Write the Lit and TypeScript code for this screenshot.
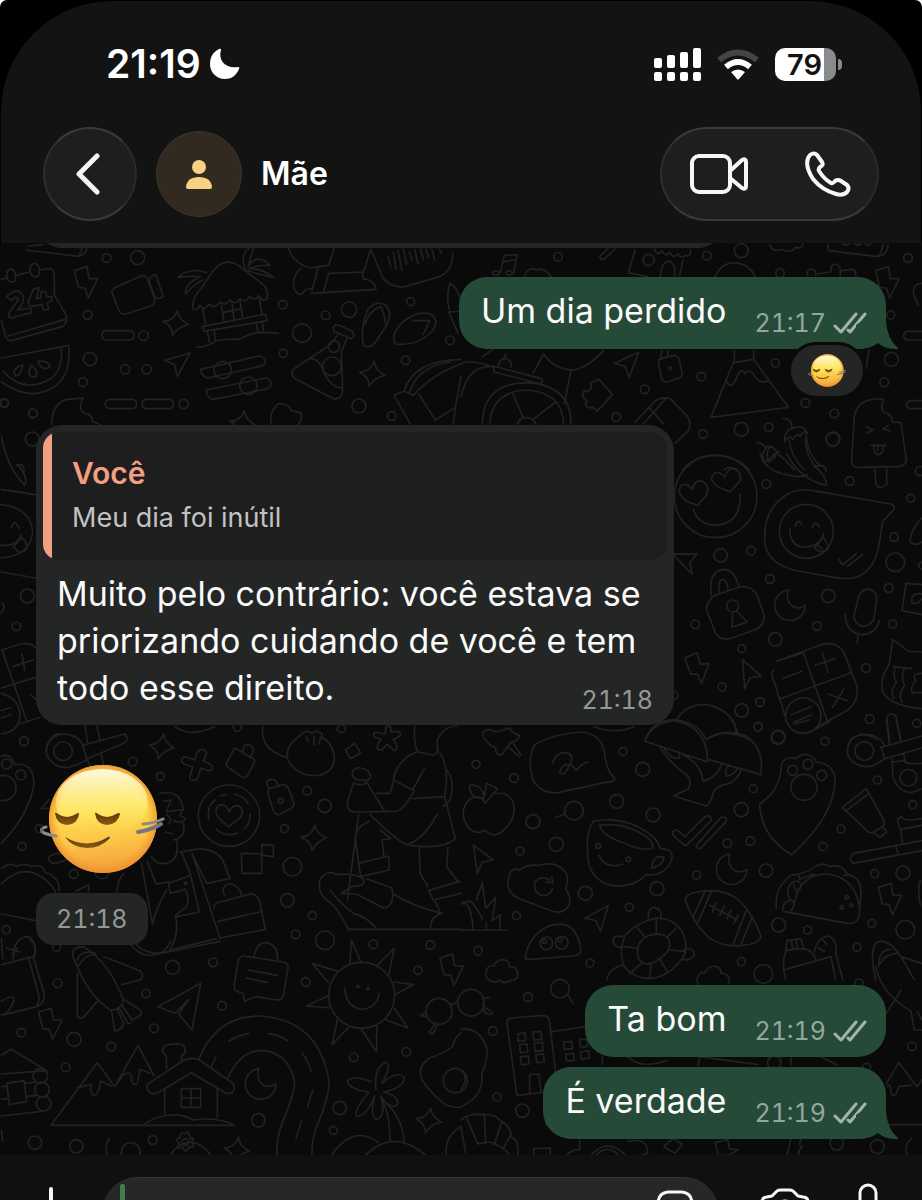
import { LitElement, html, svg, css } from "lit";
import { customElement, property } from "lit/decorators.js";

type Dot = [number, number, number];
type Stamp = [string, number, number, number?];

/* Small shapes that the wallpaper repeats, each centred on 0,0. */
const STAMPS: Record<string, string> = {
  sparkle: "M6 -38 Q8 -12 38 4 Q10 8 -10 36 Q-8 10 -38 -6 Q-6 -6 6 -38Z",
  bolt: "M-34 -36 L4 -48 L10 -12 L36 -12 L8 46 L-2 16 L-22 14Z",
  moon: "M-6 -46 A46 46 0 1 0 46 0 Q26 14 6 2 Q-14 -14 -6 -46Z",
  arrow: "M-38 -14 L38 -36 L0 34 L-8 0Z",
  pointer: "M-18 -42 L38 6 L4 12 L-12 44Z",
  cloud: "M-34 30 Q-54 20 -46 0 Q-40 -18 -24 -14 Q-12 -38 10 -32 Q24 -28 24 -12 Q46 -14 48 8 Q50 28 30 28 Q6 44 -6 28 Q-20 40 -34 30Z",
};

interface Sheet {
  x: number;
  y: number;
  dots: Dot[];
  stamps: Stamp[];
  lines: string[];
}

/* The wallpaper is drawn in sheets, three drawing units to the pixel. */
const SHEETS: Sheet[] = [
  {
    x: 0,
    y: 230,
    dots: [
      [320, 84, 13], [413, 83, 21], [263, 255, 13], [431, 317, 14], [270, 387, 20], [375, 418, 14], [440, 418, 14],
      [249, 456, 13], [551, 522, 14], [99, 550, 13], [12, 519, 13], [848, 224, 13], [977, 256, 13], [1047, 239, 23],
      [906, 309, 28], [850, 370, 12], [1232, 215, 12], [1350, 331, 13], [1217, 391, 13], [1077, 528, 21],
      [1175, 558, 13], [1002, 350, 17], [996, 409, 28], [668, 420, 26], [745, 467, 26],
    ],
    stamps: [["bolt", 257, 158], ["sparkle", 527, 280], ["sparkle", 1117, 432], ["arrow", 532, 405], ["sparkle", 727, 580]],
    lines: [
      "M78 60 L235 79 Q258 74 260 54 M245 56 L238 78 M85 48 L128 44",
      "M4 148 L20 144 M48 136 L88 126 M118 120 L150 116 Q162 118 163 140 L163 196 M163 196 L196 250 Q206 280 186 290 L34 332 Q18 332 14 310 L4 270 M196 268 L24 318",
      "M20 140 C18 112 44 110 46 134 C50 160 28 164 20 140Z M90 124 C88 96 114 92 118 118 C120 144 98 150 90 124Z",
      "M20 200 Q50 168 68 194 Q78 216 52 240 L92 234 L94 248 L32 264 Q22 258 28 248 L56 208 Q48 194 34 212Z",
      "M100 178 L118 172 L108 206 L124 202 L122 186 L138 184 L140 200 L156 200 L154 214 L142 218 L146 238 L130 240 L126 224 L90 230 L84 216Z",
      "M4 384 L206 346 Q214 430 168 466 Q96 520 4 456 M184 352 Q190 420 150 448 Q70 492 10 424",
      "M42 426 Q48 408 68 406 Q64 436 46 438Z M94 406 Q116 420 108 440 Q88 446 86 424Z M114 394 Q140 390 150 408 Q138 422 122 410Z",
      "M155 584 Q156 520 200 508 L250 504 Q232 530 250 548 Q276 552 278 574 L300 584",
      "M336 188 Q334 178 350 170 L424 138 Q436 134 442 146 L464 208 Q466 224 452 228 L378 252 Q362 256 356 240Z M448 156 Q446 138 468 134 L490 200 Q476 210 464 200Z",
      "M318 302 H390 Q402 304 402 317 Q400 330 390 330 H318 Q306 328 306 317 Q306 304 318 302Z",
      "M328 508 H398 Q410 510 410 523 Q408 536 398 536 H328 Q316 534 316 523 Q316 510 328 508Z M438 508 H508 Q520 510 520 523 Q518 536 508 536 H438 Q426 534 426 523 Q426 510 438 508Z",
      "M578 236 Q576 200 606 172 L640 122 Q680 74 728 116 L790 164 Q808 184 800 208 Q786 214 776 196 Q766 216 748 200 Q738 220 720 206 Q706 228 690 210 Q676 230 660 216 Q642 240 628 222 Q612 246 600 226 Q592 246 578 236Z",
      "M608 236 L616 280 M664 226 L672 276 M720 212 L728 264 M778 204 L786 256 M668 248 L724 236 M696 222 L702 268 M606 290 L796 252 L802 272 L612 304Z M622 304 L628 336 M642 300 L646 330 M768 276 L774 306 M786 272 L790 302 M590 352 Q620 352 650 332 Q690 326 720 328 Q760 300 834 310",
      "M620 128 Q570 110 534 142 Q570 138 602 140 Q554 160 556 192 Q586 160 608 150 M736 116 Q714 66 764 44 Q752 80 744 112 Q768 66 810 106 Q774 104 748 116 Q790 116 820 142 Q780 134 744 122",
      "M602 418 L776 378 Q796 378 796 398 Q792 408 776 410 L624 444 Q604 440 602 418Z M618 480 L798 444 Q816 452 812 468 Q806 476 794 478 L640 508 Q620 506 618 480Z",
      "M866 56 Q876 96 930 114 L986 106 L1002 56 M930 114 Q960 110 986 106 M902 114 Q876 140 882 176 Q896 206 914 182 Q928 170 936 180 L954 114 M934 190 L970 188 L986 130 L1090 126 M970 188 L1128 178 Q1126 152 1090 146 Q1084 136 1094 116 L1112 58 L1150 146 Q1180 176 1214 170 L1312 142 Q1358 128 1358 70",
      "M1164 78 L1172 110 M1180 68 L1188 116 M1194 60 L1206 122 M1210 58 L1220 102 M1228 66 L1236 92 M1244 58 L1254 102 M1262 58 L1270 90 M1278 58 L1286 84 M1296 58 L1304 92 M1318 58 L1326 72",
      "M1090 346 Q1080 300 1102 240 Q1130 206 1160 228 Q1184 260 1142 312 Q1114 364 1090 346Z M1096 280 Q1110 240 1142 230 Q1154 250 1156 282 M1186 342 Q1170 316 1206 278 Q1250 240 1292 252 Q1322 274 1294 306 Q1250 350 1186 342Z M1238 272 L1290 272 L1270 312",
      "M1000 294 Q1004 280 1018 286 L1056 304 Q1068 316 1054 326 L1002 304Z M1016 312 L986 348 L882 416 Q868 432 886 446 L1000 506 Q1026 510 1028 480 L1024 366 L1040 326 M926 386 Q960 382 974 434 Q996 472 1024 474",
      "M1350 246 Q1336 200 1350 160 Q1370 172 1378 200 M1346 246 L1374 310 M1346 246 L1380 244",
      "M1182 496 L1212 484 L1240 496 Q1300 430 1383 402 M1212 484 Q1240 390 1383 388 M1228 490 Q1250 410 1350 396 M1182 496 L1232 584 M1256 492 L1306 570 M1306 570 L1366 532 L1360 584 M1366 532 L1383 440",
      "M812 580 Q812 540 824 534 Q832 516 850 522 Q868 526 872 540 L904 550 Q906 570 894 584",
    ],
  },
  {
    x: 461,
    y: 230,
    dots: [
      [291, 80, 13], [563, 90, 17], [738, 77, 13], [841, 62, 21], [957, 129, 13], [1341, 84, 13], [1289, 255, 12],
      [1291, 388, 21], [1270, 457, 13], [943, 399, 12], [721, 440, 13], [551, 478, 13], [466, 561, 13],
      [627, 415, 4], [1033, 519, 13], [1120, 550, 13], [841, 598, 21], [923, 592, 13], [726, 612, 13], [1116, 627, 21],
    ],
    stamps: [["bolt", 1278, 158], ["arrow", 500, 408, -8]],
    lines: [
      "M118 128 L130 76 L168 74 L158 128 M128 94 L164 90 M118 128 Q98 116 94 130 Q106 142 118 128 M158 128 Q136 116 134 130 Q146 142 158 128 M190 140 Q200 108 228 120 Q250 110 270 140",
      "M416 80 L440 56 M416 80 Q420 94 434 84 L462 56 M522 60 L502 128 L560 140 M666 90 L656 136 M580 58 Q590 80 602 62 Q614 84 626 66 Q638 90 650 70 Q662 90 672 76 Q690 84 688 58 M598 140 Q602 94 624 94 Q646 98 640 140 M762 140 Q780 98 824 98 Q870 106 882 140",
      "M926 44 Q934 68 962 58 Q990 72 1004 52 Q1024 58 1026 42 M1100 44 L1102 62 L1250 80 Q1276 78 1282 44 M1266 44 Q1262 70 1250 80 M1144 40 Q1156 52 1166 38 M1180 40 Q1190 50 1200 40 M1214 42 Q1222 52 1230 40",
      "M1040 136 Q1036 116 1052 118 Q1066 120 1064 136 M1066 132 L1108 126 M1110 124 C1106 96 1136 96 1138 120 L1138 138 M1140 122 L1176 118 Q1186 124 1184 138 M1383 160 Q1354 162 1358 190 L1372 226 M1383 304 H1340 Q1328 308 1328 318 Q1330 330 1342 330 H1383 M1383 512 H1350 Q1336 514 1336 524 Q1340 536 1350 536 H1383 M1224 360 L1214 420 Q1206 440 1190 450",
      "M0 400 Q40 388 96 412 M0 500 Q20 410 84 410 M96 408 L240 446 Q246 452 240 462 L100 426Z M112 406 Q116 384 136 386 Q156 394 150 412 M128 388 L134 372 M216 430 L248 372 Q280 420 340 420 Q384 410 428 362 M64 380 L96 358 M330 420 L310 520",
      "M64 582 Q66 460 196 458 Q330 464 330 582 M86 582 Q92 486 196 480 Q304 486 308 582 M170 582 Q176 562 196 562 Q218 564 224 582 M156 492 L186 562 M284 516 L216 568",
      "M366 500 Q360 480 380 484 Q398 476 388 460 L414 448 L454 494 L408 544 Q398 528 388 534 Q366 530 378 514 Q372 508 366 500Z",
      "M522 576 L584 512 Q606 498 630 508 L680 560 Q692 580 682 602 L642 640 M564 532 L606 580 M612 508 L546 582",
      "M594 388 L636 376 Q650 376 654 388 L664 430 Q662 442 650 446 L618 456 Q606 456 602 444 L592 400Z M600 386 L602 362 M618 380 L622 362",
      "M820 360 L820 390 L750 562 L982 532 L878 388 L878 360 M820 398 L878 388 M796 454 Q812 486 832 430 Q846 414 852 430 Q864 416 876 430 Q896 466 920 452",
      "M1192 712 Q1170 712 1172 690 L1180 560 Q1190 500 1268 508 Q1256 536 1270 548 Q1294 552 1294 576 L1320 578 L1336 690 Q1336 706 1312 710Z M1216 590 L1236 600 L1216 610 M1284 586 L1266 596 L1288 604 M1230 646 H1274 M1238 648 Q1238 674 1252 674 Q1268 672 1266 648 M1250 650 V662",
      "M966 566 Q990 562 994 596 Q970 600 970 636 Q986 610 996 630 Q1006 606 1018 620 Q1024 598 1040 610 Q1024 580 994 596 M984 630 Q990 680 1030 720 M1034 612 Q1042 680 1078 706 M888 638 Q908 640 916 656 Q896 670 912 700 Q922 680 930 690 Q936 664 950 672 Q940 644 916 650 M948 670 Q976 690 1000 720 M1060 712 Q1080 700 1096 718",
      "M664 720 Q700 676 766 676 Q830 680 866 720 M790 720 Q804 704 826 720",
    ],
  },
  {
    x: 600,
    y: 440,
    dots: [
      [499, 132, 13], [749, 123, 13], [932, 175, 12], [347, 169, 124], [453, 332, 13], [362, 346, 20], [510, 417, 13],
      [882, 291, 13], [886, 367, 28], [866, 444, 13], [685, 468, 20], [878, 552, 12], [651, 558, 13], [286, 553, 13],
      [526, 598, 20], [425, 626, 12], [366, 741, 12], [480, 786, 13], [425, 811, 20], [474, 860, 13], [535, 890, 20],
      [798, 684, 13], [809, 837, 13], [950, 850, 12], [698, -2, 20], [619, 274, 81], [398, 498, 18], [610, 827, 53],
      [960, 93, 14], [222, 766, 12], [966, 377, 10],
    ],
    stamps: [["moon", 570, 496], ["pointer", 446, 702], ["bolt", 292, 686, -6], ["pointer", 258, 362, -40]],
    lines: [
      "M294 196 Q244 184 238 154 Q238 130 260 134 Q272 138 276 148 Q286 116 308 124 Q330 138 320 164Z M390 156 Q342 140 334 118 Q338 94 358 98 Q370 104 374 112 Q384 82 406 86 Q426 98 420 122Z M280 208 Q292 252 346 256 Q424 252 420 162",
      "M554 168 Q590 142 640 152 L872 192 Q886 196 882 208 L848 244 L836 320 Q820 400 760 414 Q740 418 700 412 L580 390 Q490 364 494 290 Q494 208 554 168Z",
      "M570 264 Q566 318 616 322 Q660 318 672 280 M586 258 Q594 232 606 254 M636 264 Q644 238 658 260 M644 324 L670 292 Q682 306 684 326 Q672 340 656 334Z M656 316 L668 330 M716 358 L728 374 L768 342 M744 378 L788 344",
      "M480 40 Q494 92 560 104 Q600 116 622 104 M560 40 Q600 120 680 136 Q680 110 646 80 Q620 50 616 0 M648 78 Q680 70 678 96 M510 20 Q494 40 508 66 Q512 48 524 54 Q528 32 540 36",
      "M824 88 L828 132 Q840 152 860 132 L860 88 M966 234 Q930 270 930 306 Q944 320 966 306",
      "M334 466 Q324 396 368 388 Q404 388 416 440 M346 462 L346 466 M358 460 Q352 420 368 418 Q382 420 384 450 M330 480 Q320 490 320 510 L346 578 Q360 602 390 596 L470 568 Q496 552 492 524 L470 462 Q452 436 420 440 L340 468Z M398 516 L396 562 L442 546 L410 514",
      "M776 470 Q786 444 810 448 Q832 458 830 480 L822 536 Q810 562 784 558 Q762 550 762 528Z M736 522 Q736 580 788 584 Q828 580 838 542 M774 586 L772 608",
      "M966 434 L918 430 L906 512 L966 524 M966 462 Q930 456 936 488 Q950 496 966 476",
      "M540 660 L664 614 Q706 602 730 634 L770 736 Q780 776 744 810 L660 856 M520 690 Q510 700 524 730 L556 830 M530 664 L610 638 L684 850 M540 776 L754 698 M546 716 L606 694 M644 676 L706 656 M668 640 L684 698 M684 762 L742 782 M732 746 L698 802 M574 824 L634 800 M582 846 L636 824",
      "M966 636 L926 634 L878 598 L868 672 Q836 720 850 760 Q880 800 966 806 M880 680 L936 686 M886 684 Q876 712 890 726 Q868 752 882 776 M912 688 Q902 720 914 736 Q894 762 906 786 M966 700 Q930 700 948 722 Q930 740 936 758 L966 758",
      "M136 898 Q160 836 230 840 Q296 850 318 898 M232 836 Q260 790 320 794 Q400 810 410 880 M318 898 Q370 862 450 898 M860 832 Q870 814 888 828 L902 900 M860 832 L868 896 M752 898 Q790 870 830 898",
    ],
  },
  {
    x: 0,
    y: 400,
    dots: [[99, 40, 13], [14, 10, 12], [97, 117, 21], [82, 588, 21], [49, 679, 13], [72, 1023, 13]],
    stamps: [],
    lines: [
      "M4 108 Q20 200 74 256 Q86 230 52 194 M50 196 Q74 190 72 212 M4 268 L106 284 M0 314 Q90 320 98 396 Q90 470 0 474 M34 384 Q42 354 58 386 M0 436 Q54 440 64 402 M40 440 L66 412 Q84 430 80 446 Q70 458 56 456Z M4 516 L106 534 M4 640 Q20 616 6 608",
      "M6 750 L60 732 Q90 728 106 742 M6 750 L80 962 M4 864 L106 832 M66 762 L74 812 M38 800 L100 780 M90 884 L110 900 M4 880 Q56 896 60 940 Q60 996 4 1002 M4 932 L32 922 M4 954 L32 944 M60 972 L120 952 M138 1050 Q146 1006 180 1000",
    ],
  },
  {
    x: 0,
    y: 720,
    dots: [
      [72, 64, 13], [189, 94, 28], [20, 132, 15], [62, 165, 15], [398, 125, 13], [481, 169, 12], [687, 287, 92],
      [922, 212, 13], [974, 258, 20], [853, 326, 12], [877, 440, 28], [862, 541, 20], [937, 587, 12], [887, 643, 13],
      [975, 661, 28], [66, 379, 12], [221, 462, 13], [19, 629, 12], [170, 682, 12], [1120, 673, 13], [1291, 675, 13],
      [842, 242, 7], [118, 326, 12], [10, 204, 38], [1024, 26, 12], [712, 22, 12], [557, 490, 4], [306, 454, 22],
    ],
    stamps: [["sparkle", 485, 80], ["sparkle", 942, 354, -6]],
    lines: [
      "M248 72 Q224 36 176 44 Q134 60 140 104 Q160 146 206 142 Q252 128 262 116 L372 70 Q390 56 374 42 L248 76 L260 116 M262 66 L256 18 M300 58 L290 18 M262 120 L270 140 M304 104 L310 134 M524 20 Q570 54 644 20",
      "M4 110 Q30 96 44 134 Q98 124 102 190 Q90 280 4 370 M148 264 L124 266 L148 238 M206 398 Q140 400 146 420 Q160 440 200 418",
      "M592 96 Q602 82 616 92 Q622 96 618 104 L610 124 L630 132 Q640 138 636 148 Q630 154 620 150 L602 144 L594 172 Q588 184 574 180 Q568 176 570 168 L578 142 L552 132 Q542 126 546 116 Q552 108 562 112 L584 120Z",
      "M704 84 L760 116 Q766 122 762 130 L742 168 Q734 176 724 170 L682 140 Q676 132 682 124Z M730 96 Q726 72 748 74 Q764 80 758 100 L752 110",
      "M788 20 Q780 90 860 112 M906 42 Q850 80 864 120 Q890 172 960 166 Q1010 150 1002 102 Q990 60 964 52 Q970 36 956 38 Q946 26 938 42 Q922 26 906 42Z M920 52 L924 64 M942 50 L942 76 M962 52 L956 72",
      "M1036 90 L1064 70 L1082 98 L1052 116Z M1160 18 Q1176 14 1172 36 L1196 34 Q1210 44 1190 54 L1180 58 Q1200 86 1184 92 L1160 72 Q1144 100 1132 86 Q1130 70 1144 58 L1122 50 Q1116 34 1136 38 L1154 42Z",
      "M806 206 L850 194 Q862 196 866 206 L882 250 Q880 264 868 268 L838 284 Q826 286 820 272 L804 222Z M806 204 Q792 178 816 178 Q828 178 834 196",
      "M686 320 Q644 290 648 270 Q652 250 672 256 Q684 262 688 276 Q698 252 718 258 Q734 272 722 292Z M626 300 Q620 256 646 240 M660 228 L676 224 M704 222 Q736 230 744 252 M750 282 Q752 310 734 326 M648 326 Q670 352 712 340",
      "M480 220 Q540 206 550 268 L498 276 L514 240 L490 244 M500 284 Q520 296 506 312 M520 300 Q534 310 550 304 Q562 292 540 288 L548 270 M550 310 Q560 350 520 360 M496 336 L520 342 M530 362 Q540 420 500 430 Q470 436 454 410",
      "M540 396 L600 386 Q660 392 672 430 L690 476 L620 490 L576 400 L660 654 M546 400 L572 466 L508 490 Q504 500 512 520 L556 508 Q570 530 560 560 L526 586 Q540 640 510 690 L650 656 M572 466 L598 576 L530 590 M424 430 L458 612 Q470 560 500 510 M442 424 L468 492 L506 486",
      "M674 528 Q660 500 690 490 Q720 500 724 524 M642 566 Q640 548 660 546 L744 524 Q770 516 780 548 L796 628 L660 654 M654 604 L780 576 M400 660 Q430 710 500 696",
      "M350 516 Q356 470 372 460 M228 514 L266 494 L266 514",
      "M724 400 L784 402 L786 460 L726 460Z M786 374 L820 376 L820 410 L786 406Z",
      "M4 446 Q30 424 50 440 Q70 426 96 440 Q130 430 134 456 Q180 470 178 514 M4 492 Q70 424 138 480 Q160 500 166 516 M4 582 L106 602 M40 716 Q40 650 86 650 Q116 670 100 716 M4 654 L8 716",
      "M1244 20 Q1240 70 1254 96 L1292 104 Q1300 110 1312 96 L1312 60 Q1330 20 1370 18 M1250 96 Q1190 120 1180 180 L1238 210 L1274 144 M1318 96 Q1350 140 1334 230 L1238 236 M1180 186 L1170 220 L1130 220 M1244 212 Q1210 270 1190 274 L1060 276 Q1036 270 1044 240 L1060 190 M1056 160 Q1060 142 1080 144 Q1108 146 1112 170 Q1108 184 1090 180 Q1060 184 1056 160Z M1060 190 Q1096 200 1098 184 L1152 270 M1110 284 Q1200 370 1220 374 Q1270 360 1312 282",
      "M1334 230 L1366 356 Q1330 390 1228 376 M1108 304 Q1070 320 1066 350 L1076 430 L1166 408 L1168 450 L1082 470 L1076 430 M1140 330 L1172 356 L1146 360 L1152 410 M1258 384 L1260 460 L1284 500 M1344 382 L1340 440 L1370 480 L1380 486 M1286 512 L1378 484 M1286 512 L1300 540 L1383 520 M1076 284 L1042 540 M1340 150 Q1366 180 1350 240 L1330 260",
      "M1044 626 Q1010 560 986 544 Q950 520 960 480 Q980 446 1010 464 Q1060 458 1090 476 Q1098 500 1060 498 L1024 520 L1070 522 L1150 564 Q1180 560 1178 520 L1176 504 L1100 476 M1130 626 Q1100 590 1060 580 Q1020 550 990 510 M1180 522 Q1240 560 1326 580 Q1290 590 1292 622 M1044 628 H1383 M1304 540 L1318 572",
    ],
  },
  {
    x: 461,
    y: 720,
    dots: [
      [45, 133, 12], [159, 174, 13], [339, 272, 28], [216, 305, 21], [177, 393, 12], [286, 373, 21], [467, 244, 21],
      [486, 95, 12], [545, 148, 21], [576, 285, 21], [373, 520, 21], [588, 506, 21], [505, 562, 12], [166, 587, 12],
      [51, 692, 13], [387, 729, 12], [707, 465, 12], [799, 370, 13], [868, 363, 13], [841, 269, 21], [877, 206, 12],
      [891, 20, 13], [951, 53, 20], [1092, 64, 12], [1210, 93, 28], [1249, 180, 12], [1140, 327, 12], [1086, 380, 12],
      [1342, 173, 25], [1355, 254, 12], [915, 452, 20], [1241, 461, 12], [1326, 459, 21], [953, 615, 21], [1040, 630, 12],
      [1232, 610, 12], [1333, 629, 28], [1188, 682, 12], [841, 725, 12], [907, 762, 28], [1029, 202, 39], [995, 151, 15],
      [1041, 133, 15], [1082, 166, 15], [412, 378, 7], [502, 418, 7], [256, 670, 19], [302, 668, 19], [1158, 532, 5],
      [1142, 562, 5], [1171, 556, 5], [250, 664, 6], [297, 660, 6],
    ],
    stamps: [["moon", 812, 448], ["arrow", 412, 600, -12], ["pointer", 58, 416, -4], ["bolt", 1286, 538], ["cloud", 122, 752], ["cloud", 756, 772]],
    lines: [
      "M64 40 Q80 20 104 36 L146 24 Q160 46 176 44 Q172 66 150 66 L122 104 Q104 108 104 84 Q70 68 64 40Z M144 82 L174 110 M158 70 L180 106",
      "M224 72 Q290 38 366 36 Q420 44 430 96 Q434 150 462 176 Q460 184 450 184 L290 218 Q240 222 216 180 Q196 110 224 72Z M274 130 Q284 96 316 98 Q340 104 328 130 Q312 172 296 158 Q300 130 330 134 L346 152 Q360 130 382 126",
      "M70 234 Q24 236 26 196 Q60 190 70 230 L76 190 L110 206 L72 250 Q60 220 28 236 Q-8 270 16 314 Q40 350 72 330 Q100 360 130 328 Q170 290 156 246 Q140 212 104 222 M312 282 L286 292",
      "M552 64 Q570 10 640 2 Q740 20 740 126Z M742 56 Q790 24 850 46 Q910 80 900 164 L742 118 M596 80 Q620 120 660 152 Q700 176 682 206 L638 228 L736 258 Q750 250 758 214 Q770 196 806 190 Q832 176 840 150 M610 86 Q630 120 656 114 L654 100 M666 104 Q720 130 726 184 Q764 176 784 130 M802 134 Q790 150 796 168 Q820 166 830 144 M816 0 L830 40 M400 20 Q460 44 520 20",
      "M396 304 Q470 290 530 320 Q590 350 598 386 Q640 386 632 420 Q610 470 556 464 Q510 510 440 494 Q380 470 380 400 Q374 340 396 304Z M416 316 Q480 306 540 340 Q580 362 576 384 Q550 396 490 370 Q420 344 416 316Z M588 410 L610 412 Q602 440 572 444 Q574 420 588 410Z M414 406 Q434 450 486 432",
      "M634 338 Q640 326 650 332 L672 350 L734 288 Q752 286 752 300 L674 378 L636 346Z M706 376 L780 292 Q798 288 796 304 L720 384 Q706 388 706 376Z",
      "M992 404 Q900 350 896 252 Q960 210 962 130 Q976 106 1004 116 Q1040 86 1066 126 Q1120 132 1122 180 Q1120 290 992 404Z M974 0 Q1000 60 1060 30 L1110 0 M1000 12 Q1020 6 1044 0",
      "M1270 76 Q1250 36 1196 44 Q1150 60 1162 110 Q1190 150 1240 136 L1272 116 L1383 84 M1260 82 L1383 48 M1260 82 L1272 116 M1276 0 L1286 74 M1306 0 L1320 66 M1292 112 L1296 170 Q1310 214 1350 218 L1383 206 M1328 100 L1332 126 Q1350 134 1383 130 M1292 126 L1330 122",
      "M1144 262 L1216 206 L1268 300 Q1272 318 1262 322 L1234 338 Q1222 340 1214 328Z M1156 272 L1224 220 M1236 336 L1256 352 L1278 336 L1264 320",
      "M1320 328 Q1300 300 1320 290 Q1330 306 1383 296 M1318 328 L1383 316 M1320 330 L1324 370 M1383 362 L1178 400 Q1160 412 1176 430 L1383 392 M1304 378 L1312 402",
      "M144 470 Q150 440 176 450 Q196 432 234 436 Q290 420 316 460 Q324 480 314 506 Q336 540 320 562 Q300 584 270 572 L170 534 Q130 510 144 470Z M266 480 Q236 464 220 490 Q220 524 248 528 Q270 524 274 506 M256 486 L276 488 L272 472",
      "M194 716 Q190 690 220 650 Q260 604 310 614 Q350 624 360 690 Q358 704 340 708 L206 718Z M0 552 Q30 540 36 626 M0 630 H140 M6 546 L20 546 Q30 530 64 596 M46 540 L64 488 L74 566 L104 532 L94 602 L118 584 L116 626 M76 610 V626",
      "M672 536 Q680 520 710 516 Q790 500 840 546 Q880 590 900 650 Q896 664 870 672 Q790 690 740 650 Q690 600 672 536Z M732 514 L696 592 M752 512 L708 614 M856 570 L816 674 M874 590 L840 674 M746 556 L830 600 M764 548 L754 576 M790 558 L776 586 M810 570 L798 596 M832 584 L818 610",
      "M946 566 Q940 500 990 466 Q1040 460 1064 438 Q1090 426 1104 440 Q1144 430 1160 464 Q1200 470 1200 520 L1194 590 Q1186 612 1160 610 L966 574 M1000 548 Q1020 460 1100 462 Q1180 472 1196 560 M986 536 Q970 500 1000 484 Q1026 480 1016 510 M964 570 Q966 544 990 540 Q1008 546 990 572 M1014 466 L1016 478 L1060 462 M1150 466 L1160 464 M998 492 L1000 504 M1006 506 L1004 514",
      "M562 600 Q560 560 582 562 Q604 566 600 598 M484 650 Q456 644 456 664 Q462 684 482 682 M668 690 Q700 680 700 704 Q690 724 664 718 M490 650 Q520 610 586 594 Q640 594 666 640 Q686 690 660 720 Q620 770 570 776 Q520 776 490 740 Q472 700 490 650Z M530 690 Q530 660 566 646 Q610 634 624 660 Q634 690 600 712 Q570 740 544 728 Q526 716 530 690Z M586 594 V640 M528 622 L552 652 M486 680 L528 684 M508 760 L544 728 M566 776 L570 734 M620 758 L596 716 M672 694 L628 690 M646 624 L618 652 M484 734 Q440 750 438 780",
      "M974 692 L978 662 L1020 656 L1028 686 M990 660 L996 688 M1004 658 L1010 686 M974 692 Q1000 686 1028 686 Q1056 690 1064 720 M976 694 Q960 720 974 780 M974 748 L1110 710 L1124 780 M1060 696 Q1070 650 1104 648 Q1130 660 1124 700 L1146 780 M1086 660 L1096 672 M1072 684 L1090 694 M1244 780 Q1224 690 1246 668 Q1280 650 1320 710 L1383 730 M1254 740 Q1250 690 1290 688 M1258 730 Q1270 704 1306 700 M1378 480 Q1368 510 1378 556 M1320 710 L1360 780",
    ],
  },
  {
    x: 0,
    y: 940,
    dots: [
      [518, 82, 21], [639, 67, 13], [173, 130, 13], [438, 160, 13], [64, 278, 13], [222, 298, 21], [334, 320, 13],
      [462, 265, 13], [666, 197, 13], [917, 126, 13], [197, 382, 13], [775, 541, 20], [458, 600, 13], [105, 608, 20],
      [229, 619, 20], [1019, 504, 20], [1000, 571, 12], [1061, 352, 13], [1219, 335, 13], [1254, 91, 12], [1085, 166, 99],
      [121, 408, 22], [126, 449, 22], [131, 491, 22], [1317, 214, 39], [1366, 422, 36], [392, 636, 28], [1074, 140, 3],
      [1104, 146, 3], [556, 606, 10],
    ],
    stamps: [["bolt", 150, 252], ["bolt", 1354, 90], ["moon", 782, 432], ["sparkle", 1286, 542], ["sparkle", 710, 630]],
    lines: [
      "M4 74 L100 50 L132 160 Q136 190 110 200 L4 226 M86 54 L112 150 Q124 180 108 200 M104 48 Q110 10 90 0 M4 184 Q40 160 42 180 Q30 220 4 226 M36 44 L52 24 M20 24 L60 36",
      "M228 70 Q200 20 250 20 Q330 70 370 180 Q366 210 330 210 Q260 160 228 70Z M232 60 Q240 30 284 38 M236 76 Q260 40 288 44 M312 50 L420 92 Q436 108 420 120 L366 134 M232 100 L232 228 Q240 240 252 230 L292 184 M334 210 L344 272 Q360 274 372 252 L350 204 M356 202 L384 250 L392 250 M366 196 L396 240 Q430 226 424 212 L374 180",
      "M474 200 L602 130 L576 270 L536 222 L566 178 L526 220Z",
      "M732 48 L850 66 Q866 70 864 84 L850 166 Q846 182 830 180 L768 170 L734 184 L730 162 L704 150 Q702 140 704 128 L714 66 Q716 50 732 48Z M762 50 Q770 6 800 8 Q836 16 832 60 M744 90 L832 106 M740 114 L802 128 M394 16 Q430 60 480 40 L660 4 M480 40 Q500 30 512 4",
      "M1050 70 L1054 0 L1082 64 M1130 78 L1182 26 L1166 106 M1180 126 L1240 134 L1184 164 M1184 206 L1224 264 L1158 240 M1130 256 L1130 336 L1084 268 M1046 262 L996 314 L1012 240 M990 204 L920 198 L988 166 M986 128 L936 70 L1014 94 M1034 144 Q1038 200 1084 208 Q1128 206 1138 160",
      "M154 554 L292 368 L344 440 L414 316 L462 408 M344 440 L370 404 Q398 390 394 420 Q400 440 412 430 L420 388 L450 400 M232 444 Q262 436 272 432 Q270 466 284 466 Q296 464 302 424 L334 438 M154 556 H700 M500 386 L498 346 Q484 340 490 322 Q500 310 544 312 Q560 320 554 340 L544 348 L546 366",
      "M446 430 L552 360 Q576 350 598 360 L696 428 Q710 440 696 458 Q684 464 672 456 L574 398 L478 456 Q462 466 448 456 Q434 444 446 430Z M494 446 V520 M652 446 V532 M544 446 H602 V502 H544Z M573 446 V502 M544 474 H602 M430 554 Q480 520 540 526 Q560 528 580 540 Q650 530 700 554",
      "M596 358 Q650 226 782 228 Q960 240 988 430 Q984 480 950 560 Q934 600 936 648 M684 414 Q720 330 788 332 Q870 340 884 430 Q880 470 846 550 Q830 590 830 648 M634 380 L648 350 M686 304 Q710 288 746 280 M804 280 Q836 284 862 302 M906 340 Q924 362 934 394 M938 450 L922 502 M904 544 L888 596",
      "M34 328 L140 392 L4 402 M34 328 L4 346 M4 440 L20 438 M74 430 L106 426 M20 430 L72 422 L80 484 L28 494Z M4 478 L22 476 M78 470 L108 466 M4 528 L124 514",
      "M1128 450 Q1120 380 1160 366 Q1174 380 1146 430 Q1190 390 1212 412 Q1216 440 1152 456 Q1200 470 1192 494 Q1170 510 1142 468 Q1160 530 1130 538 Q1108 530 1124 468 Q1100 530 1070 528 Q1060 510 1108 456 Q1050 450 1042 424 Q1056 404 1112 424 M1146 480 Q1170 520 1170 604 M1160 490 Q1210 540 1212 606 M992 648 Q1060 550 1136 608 M1094 648 Q1180 560 1280 648",
      "M1383 280 Q1364 290 1358 320 Q1330 340 1290 354 Q1250 376 1266 420 Q1300 470 1340 496 Q1370 506 1383 500 M1383 560 Q1330 590 1340 648 M1278 216 L1262 226 L1278 230 M1306 250 L1288 276 Q1296 290 1304 272 L1312 250 M1356 194 L1370 186 M328 594 Q312 620 322 646 M510 648 Q530 610 570 606 Q610 610 634 648 M556 582 Q566 566 570 596 Q590 590 574 606 Q590 626 566 620 Q560 646 548 622 Q526 630 538 608 Q520 596 540 594 Q540 574 556 582Z M4 570 L8 604",
    ],
  },
  {
    x: 461,
    y: 940,
    dots: [
      [30, 188, 40], [201, 171, 13], [297, 146, 28], [95, 273, 13], [108, 471, 12], [184, 512, 20], [940, 368, 20],
      [1217, 382, 12], [1353, 319, 13], [1127, 610, 20], [1249, 620, 21], [1194, 130, 13], [262, 548, 8],
    ],
    stamps: [],
    lines: [
      "M322 166 L336 190 M66 176 L84 172 M66 190 L70 216 Q90 230 94 218 L76 204 M0 268 Q60 260 78 330 Q80 360 62 400 Q70 470 0 500 M0 392 Q26 410 0 448",
      "M168 466 L138 250 Q138 236 152 234 L246 226 Q264 228 266 246 L290 450 M168 466 L256 456 M266 276 L384 258 M206 460 V404 L234 402 L240 456",
      "M170 282 L192 278 L194 302 L172 304Z M216 276 L240 274 L242 298 L218 300Z M176 314 L198 312 L200 336 L178 338Z M220 310 L244 306 L246 332 L222 334Z M178 350 L202 348 L204 372 L182 374Z M224 344 L248 342 L250 366 L228 368Z M308 306 L332 304 L334 326 L310 328Z M356 298 L378 298 L380 320 L358 320Z M314 342 L338 340 L340 362 L316 362Z M358 336 L382 332 L386 354 L362 358Z",
      "M0 540 Q20 520 70 524 Q100 520 120 544 Q150 560 150 590 Q176 600 170 646 M18 536 L50 612 M70 524 L74 612 M122 546 L100 614 M152 580 L126 626 M0 560 L14 640 M50 612 Q90 600 110 616 Q140 630 144 646 M218 646 V626 L268 624 V646 M316 646 Q330 630 356 628 L356 600 M390 646 Q440 590 494 646 M404 646 Q440 610 474 646 M500 604 Q560 590 560 640 L540 646 M636 596 L664 612 L642 640 L608 620Z",
      "M762 608 L800 598 L806 626 L830 630 L800 648 M762 608 L772 646 L796 646 M990 596 L978 646 M1022 598 Q1008 614 1024 622 Q1008 630 1016 646 M1352 594 Q1326 620 1340 646 M712 376 L716 350 M716 350 L890 374 M500 350 Q540 390 620 360 M424 350 V374 M990 374 V350 M1080 350 L1130 376",
      "M1276 430 L1314 368 L1368 440 L1383 420 M1278 440 Q1290 426 1290 460 Q1304 480 1312 440 L1350 436 M1280 554 H1383 M1244 80 Q1260 160 1350 214 M1320 150 L1276 220 M1350 214 L1360 270 L1383 270 M1370 216 L1383 240",
    ],
  },
];

@customElement("chat-wallpaper")
export class ChatWallpaper extends LitElement {
  static styles = css`
    :host {
      display: block;
      overflow: hidden;
      background: #0a0a0a;
    }
    .art {
      display: block;
      width: 100%;
      height: 100%;
      fill: none;
      stroke: #212222;
      stroke-width: 5;
      stroke-linecap: round;
      stroke-linejoin: round;
    }
  `;

  render() {
    return html`<svg class="art" viewBox="0 243 922 912" preserveAspectRatio="xMidYMin slice" aria-hidden="true">
      ${SHEETS.map(
        (s) => svg`<g transform="translate(${s.x} ${s.y}) scale(0.33333)">
          ${s.dots.map(([x, y, r]) => svg`<circle cx=${x} cy=${y} r=${r}></circle>`)}
          ${s.stamps.map(([k, x, y, a = 0]) => svg`<path transform="translate(${x} ${y}) rotate(${a})" d=${STAMPS[k]}></path>`)}
          ${s.lines.map((d) => svg`<path d=${d}></path>`)}
        </g>`
      )}
    </svg>`;
  }
}

@customElement("shaking-face")
export class ShakingFace extends LitElement {
  static styles = css`
    :host {
      display: block;
    }
    .face {
      display: block;
      width: 100%;
    }
  `;

  render() {
    return html`<svg class="face" viewBox="0 0 126 110" role="img" aria-label="Rosto sorrindo balançando a cabeça">
      <defs>
        <linearGradient id="skin" x1="0.45" y1="0" x2="0.55" y2="1">
          <stop offset="0" stop-color="#fbd65a"></stop>
          <stop offset="0.4" stop-color="#fee04a"></stop>
          <stop offset="0.7" stop-color="#fcc548"></stop>
          <stop offset="1" stop-color="#f39a38"></stop>
        </linearGradient>
        <radialGradient id="rim" cx="0.5" cy="0.5" r="0.5">
          <stop offset="0.82" stop-color="#f29a2e" stop-opacity="0"></stop>
          <stop offset="1" stop-color="#ee8f2c" stop-opacity="0.8"></stop>
        </radialGradient>
        <linearGradient id="shine" x1="0" y1="0" x2="0" y2="1">
          <stop offset="0" stop-color="#fffce8" stop-opacity="0.95"></stop>
          <stop offset="0.35" stop-color="#fff6b0" stop-opacity="0.7"></stop>
          <stop offset="1" stop-color="#ffec6a" stop-opacity="0"></stop>
        </linearGradient>
        <linearGradient id="brown" x1="0" y1="0" x2="0" y2="1">
          <stop offset="0" stop-color="#5a3a08"></stop>
          <stop offset="1" stop-color="#8a5a14"></stop>
        </linearGradient>
      </defs>
      <circle cx="64" cy="55" r="54" fill="url(#skin)"></circle>
      <circle cx="64" cy="55" r="54" fill="url(#rim)"></circle>
      <ellipse cx="63" cy="38" rx="46" ry="33" fill="url(#shine)"></ellipse>
      <path fill="url(#brown)" d="M16 49 Q17 48 19 50 Q28 56 37 50 Q40 48 40 50 Q39 60 28 61 Q17 60 16 49Z"></path>
      <path fill="url(#brown)" d="M56 49 Q57 48 59 50 Q68 56 77 50 Q81 48 81 50 Q79 60 68 61 Q57 60 56 49Z"></path>
      <path fill="url(#brown)" d="M26 73 Q48 86 69 73 Q71 72 71 74 Q62 84 48 84 Q34 84 26 73Z"></path>
      <g fill="none" stroke-linecap="round">
        <path stroke="#8a8d90" stroke-width="3" d="M7 63 Q-1 65 5 69 Q10 71 17 72"></path>
        <path stroke="#5e6164" stroke-width="2" d="M3 64 L2 68"></path>
        <path stroke="#8b8a86" stroke-width="3" d="M104 60 Q116 59 124 55"></path>
        <path stroke="#77777a" stroke-width="4" d="M99 68 Q112 66 122 60"></path>
      </g>
    </svg>`;
  }
}

@customElement("message-bubble")
export class MessageBubble extends LitElement {
  @property() text = "";
  @property() time = "";
  @property({ type: Boolean }) outgoing = false;
  @property({ type: Boolean }) tail = false;
  @property({ type: Boolean }) reacted = false;
  @property() quoteName = "";
  @property() quoteText = "";

  static styles = css`
    :host {
      display: flex;
      justify-content: flex-start;
    }
    :host([outgoing]) {
      justify-content: flex-end;
    }
    .bubble {
      position: relative;
      border-radius: 26px;
      background: #242626;
      color: #fafafa;
      font-size: 34px;
      line-height: 47px;
    }
    .in {
      max-width: 638px;
      box-sizing: border-box;
      padding: 7px 7px 10px;
    }
    .in .body {
      display: flow-root;
      padding: 10px 14px 0;
    }
    .in .meta {
      float: right;
      margin-top: 21px;
    }
    .out .body {
      display: flex;
      align-items: flex-end;
      gap: 28px;
    }
    .out {
      padding: 10px 19px 11px 22px;
      border-radius: 28px;
      background: #264a38;
    }
    .out .text {
      padding-bottom: 4px;
    }
    .body {
      margin: 0;
    }
    .meta {
      display: flex;
      align-items: center;
      gap: 7px;
      font-size: 25px;
      line-height: 30px;
      font-variant-numeric: tabular-nums;
      color: #969898;
    }
    .out .meta {
      color: #92a89c;
    }
    .ticks {
      display: block;
      width: 34px;
      height: 22px;
      fill: none;
      stroke: #a3b5ab;
      stroke-width: 3;
      stroke-linecap: round;
      stroke-linejoin: round;
    }
    .tail {
      position: absolute;
      right: -12px;
      bottom: 0;
      width: 42px;
      height: 44px;
      fill: #264a38;
    }
    .reaction {
      position: absolute;
      right: 20px;
      bottom: -50px;
      display: grid;
      place-items: center;
      width: 78px;
      height: 57px;
      padding: 0;
      box-sizing: border-box;
      border: 3px solid #0a0a0a;
      border-radius: 29px;
      background: #242626;
    }
    .reaction shaking-face {
      width: 38px;
    }
    .quote {
      display: flex;
      flex-direction: column;
      gap: 9px;
      padding: 23px 20px 24px 29px;
      border-radius: 16px;
      background: linear-gradient(90deg, #f29f82 9px, #1e1e1e 9px);
      line-height: 36px;
    }
    .name {
      font-size: 30px;
      font-weight: 600;
      color: #f29f82;
    }
    .excerpt {
      font-size: 27px;
      color: #c2c2c2;
    }
  `;

  render() {
    return html`<article class="bubble ${this.outgoing ? "out" : "in"}">
      ${this.tail
        ? html`<svg class="tail" viewBox="0 0 42 44" aria-hidden="true">
            <path d="M30 0 V16 Q31 34 42 43 Q43 44 40 44 Q29 44 22 38 Q14 44 2 44 L0 20Z"></path>
          </svg>`
        : null}
      ${this.quoteName
        ? html`<div class="quote">
            <span class="name">${this.quoteName}</span>
            <span class="excerpt">${this.quoteText}</span>
          </div>`
        : null}
      <p class="body">
        <span class="text">${this.text}</span>
        <span class="meta">
          <time>${this.time}</time>
          ${this.outgoing
            ? html`<svg class="ticks" viewBox="0 0 34 22" role="img" aria-label="Entregue">
                <path d="M2 14 L8 20 L23 2 M15 18 L17 20 L32 2"></path>
              </svg>`
            : null}
        </span>
      </p>
      ${this.reacted ? html`<button class="reaction" aria-label="Reação"><shaking-face></shaking-face></button>` : null}
    </article>`;
  }
}

@customElement("app-root")
export class AppRoot extends LitElement {
  static styles = css`
    :host {
      display: block;
      height: 100vh;
      overflow: hidden;
      background: #0f0f0f;
      font-family: Inter, "Liberation Sans", sans-serif;
      color: #fff;
    }
    button {
      padding: 0;
      border: 0;
      background: none;
      color: inherit;
      font: inherit;
    }
    svg {
      display: block;
    }
    .line {
      fill: none;
      stroke: #f7f7f7;
      stroke-linecap: round;
      stroke-linejoin: round;
    }
    .frame {
      border-radius: 7px 7px 0 0;
      background: #000;
    }
    .page {
      background: #fff;
    }
    header {
      padding: 40px 42px 22px;
      border: 1px solid #000;
      border-bottom: 0;
      border-radius: 112px 112px 0 0;
      background: #131313;
    }
    .status {
      display: flex;
      align-items: center;
      justify-content: space-between;
      height: 46px;
      padding: 0 37px 0 63px;
      margin-bottom: 40px;
    }
    .clock {
      display: flex;
      align-items: center;
      gap: 8px;
      font-size: 39px;
      font-weight: 600;
      line-height: 46px;
    }
    .signals {
      display: flex;
      align-items: center;
      gap: 16px;
    }
    .battery {
      display: flex;
      align-items: center;
      gap: 2px;
    }
    .level {
      display: grid;
      place-items: center;
      width: 61px;
      height: 33px;
      box-sizing: border-box;
      padding-right: 2px;
      border-radius: 10px;
      background: linear-gradient(90deg, #fff 80%, #8b8b8b 80%);
      color: #131313;
      font-size: 29px;
      font-weight: 600;
      line-height: 33px;
    }
    .nub {
      width: 4px;
      height: 11px;
      border-radius: 0 4px 4px 0;
      background: #8b8b8b;
    }
    .nav {
      display: flex;
      align-items: center;
    }
    .glass {
      box-sizing: border-box;
      border: 2px solid #333;
      border-color: #3a3a3a #2a2a2a #3a3a3a #2f2f2f;
      background: #1e1e1e;
    }
    .back {
      display: grid;
      place-items: center;
      width: 94px;
      height: 94px;
      border-radius: 50%;
    }
    .contact {
      display: flex;
      align-items: center;
      gap: 19px;
      margin-left: 19px;
      font-size: 32px;
      font-weight: 600;
      line-height: 40px;
    }
    .avatar {
      display: grid;
      place-items: center;
      width: 86px;
      height: 86px;
      box-sizing: border-box;
      border: 1px solid #3f3527;
      border-radius: 50%;
      background: #322a20;
    }
    h1 {
      margin: 0;
      font: inherit;
    }
    .calls {
      display: flex;
      align-items: center;
      justify-content: space-between;
      width: 219px;
      height: 94px;
      margin-left: auto;
      padding: 0 26px 0 27px;
      border-radius: 47px;
    }
    main {
      position: relative;
      padding: 0 36px 16px;
    }
    chat-wallpaper {
      position: absolute;
      inset: 0;
    }
    .thread {
      position: relative;
      display: flex;
      flex-direction: column;
      gap: 10px;
    }
    .earlier {
      display: flex;
      align-items: flex-end;
      height: 5px;
      margin-bottom: 19px;
      overflow: hidden;
    }
    .edge {
      width: 688px;
      height: 60px;
      flex: none;
      border-radius: 26px;
      background: #242626;
    }
    .spaced {
      margin-bottom: 66px;
    }
    .sticker {
      display: flex;
      flex-direction: column;
      align-items: flex-start;
      gap: 19px;
      margin: 29px 0 30px;
    }
    .sticker shaking-face {
      width: 126px;
      margin-left: 3px;
    }
    .chip {
      padding: 11px 20px;
      border-radius: 18px;
      background: #242626;
      color: #969898;
      font-size: 25px;
      line-height: 30px;
      font-variant-numeric: tabular-nums;
    }
    footer {
      display: flex;
      align-items: center;
      padding: 22px 39px 40px 25px;
      background: #101010;
    }
    .box {
      display: flex;
      align-items: center;
      flex: 1;
      min-width: 0;
      height: 72px;
      margin: 0 41px 0 25px;
      padding: 0 25px 0 18px;
      box-sizing: border-box;
      border-top: 1px solid #343434;
      border-radius: 36px;
      background: #272727;
    }
    .caret {
      width: 5px;
      height: 60px;
      border-radius: 2px;
      background: #3f7d4f;
    }
    .box input {
      flex: 1;
      min-width: 0;
      border: 0;
      outline: 0;
      background: none;
      color: #fff;
      font: inherit;
      font-size: 34px;
    }
    .mic {
      margin-left: 43px;
    }
  `;

  render() {
    return html`
      <div class="page">
        <div class="frame">
          <header>
            <div class="status">
              <div class="clock">
                <time>21:19</time>
                <svg width="31" height="32" viewBox="0 0 31 32" fill="#fff" aria-hidden="true">
                  <path d="M10 1 Q12 0 12 2 C9 12 16 21 29 19 Q31 19 30 21 C27 28 22 31 16 31 C7 31 1 24 1 16 C1 9 4 4 10 1Z"></path>
                </svg>
              </div>
              <div class="signals">
                <svg width="47" height="33" viewBox="0 0 47 33" fill="#fff" role="img" aria-label="Sinal">
                  ${[10, 7, 4, 0].map(
                    (y, i) => svg`<rect x=${i * 13} y=${y} width="8" height=${20 - y} rx="2"></rect>
                    <rect x=${i * 13} y="24" width="8" height="9" rx="2"></rect>`
                  )}
                </svg>
                <svg width="42" height="31" viewBox="0 0 42 31" role="img" aria-label="Wi-Fi">
                  <path fill="none" stroke="#444" stroke-width="6" d="M2 11 Q21 -4 40 11"></path>
                  <path fill="none" stroke="#fff" stroke-width="6" d="M9 18 Q21 8 33 18"></path>
                  <path fill="#fff" d="M14 23 Q21 18 28 23 L22 30 Q21 31 20 30Z"></path>
                </svg>
                <div class="battery">
                  <span class="level">79</span>
                  <span class="nub"></span>
                </div>
              </div>
            </div>
            <nav class="nav">
              <button class="back glass" aria-label="Voltar">
                <svg class="line" width="28" height="42" viewBox="0 0 28 42" stroke-width="5">
                  <path d="M20 3 L2 21 L20 39" transform="translate(1 0)"></path>
                </svg>
              </button>
              <div class="contact">
                <span class="avatar">
                  <svg width="28" height="30" viewBox="0 0 28 30" fill="#f8d283" aria-hidden="true">
                    <circle cx="14" cy="8" r="7"></circle>
                    <path d="M3 30 Q1 30 1 28 Q2 18 14 18 Q26 18 27 28 Q27 30 25 30Z"></path>
                  </svg>
                </span>
                <h1>Mãe</h1>
              </div>
              <div class="calls glass">
                <button aria-label="Chamada de vídeo">
                  <svg class="line" width="60" height="40" viewBox="0 0 60 40" stroke-width="4">
                    <rect x="3" y="2" width="38" height="36" rx="7"></rect>
                    <path d="M41 17 L53 6 Q57 4 57 8 V32 Q57 36 53 34 L41 24"></path>
                  </svg>
                </button>
                <button aria-label="Ligar">
                  <svg class="line" width="47" height="47" viewBox="0 0 47 47" stroke-width="4">
                    <path d="M6 4 Q10 1 13 4 L18 11 Q20 14 16 16 Q14 18 15 20 Q20 28 27 32 Q29 33 31 30 Q34 28 37 30 L43 34 Q46 37 43 41 Q39 45 32 43 Q18 39 9 28 Q-1 12 6 4Z"></path>
                  </svg>
                </button>
              </div>
            </nav>
          </header>
        </div>
      </div>
      <main>
        <chat-wallpaper></chat-wallpaper>
        <div class="thread">
          <div class="earlier"><div class="edge"></div></div>
          <message-bubble class="spaced" outgoing tail reacted text="Um dia perdido" time="21:17"></message-bubble>
          <message-bubble
            text="Muito pelo contrário: você estava se priorizando cuidando de você e tem todo esse direito."
            time="21:18"
            .quoteName=${"Você"}
            .quoteText=${"Meu dia foi inútil"}
          ></message-bubble>
          <div class="sticker">
            <shaking-face></shaking-face>
            <time class="chip">21:18</time>
          </div>
          <message-bubble outgoing text="Ta bom" time="21:19"></message-bubble>
          <message-bubble outgoing tail text="É verdade" time="21:19"></message-bubble>
        </div>
      </main>
      <footer>
        <button aria-label="Anexar">
          <svg class="line" width="52" height="52" viewBox="0 0 52 52" stroke-width="4"><path d="M26 2 V50 M2 26 H50"></path></svg>
        </button>
        <div class="box">
          <span class="caret"></span>
          <input type="text" aria-label="Mensagem" />
          <button aria-label="Figurinhas">
            <svg class="line" width="38" height="48" viewBox="0 0 38 48" stroke-width="3">
              <path d="M12 2 H26 Q36 3 36 14 V28 L22 46 H12 Q2 44 2 34 V14 Q2 3 12 2Z M36 28 H28 Q22 30 22 38 V46"></path>
            </svg>
          </button>
        </div>
        <button aria-label="Câmera">
          <svg class="line" width="50" height="50" viewBox="0 0 50 50" stroke-width="3">
            <path d="M2 14 Q2 9 7 9 L12 8 L17 3 Q18 2 21 2 H29 Q32 2 33 3 L38 8 L43 9 Q48 9 48 14 V40 Q48 46 42 46 H8 Q2 46 2 40Z"></path>
            <circle cx="25" cy="24" r="11"></circle>
          </svg>
        </button>
        <button class="mic" aria-label="Gravar áudio">
          <svg class="line" width="30" height="60" viewBox="0 0 30 60" stroke-width="3">
            <rect x="7" y="2" width="16" height="34" rx="8"></rect>
            <path d="M2 28 Q2 44 15 44 Q28 44 28 28 M15 44 V56"></path>
          </svg>
        </button>
      </footer>
    `;
  }
}
